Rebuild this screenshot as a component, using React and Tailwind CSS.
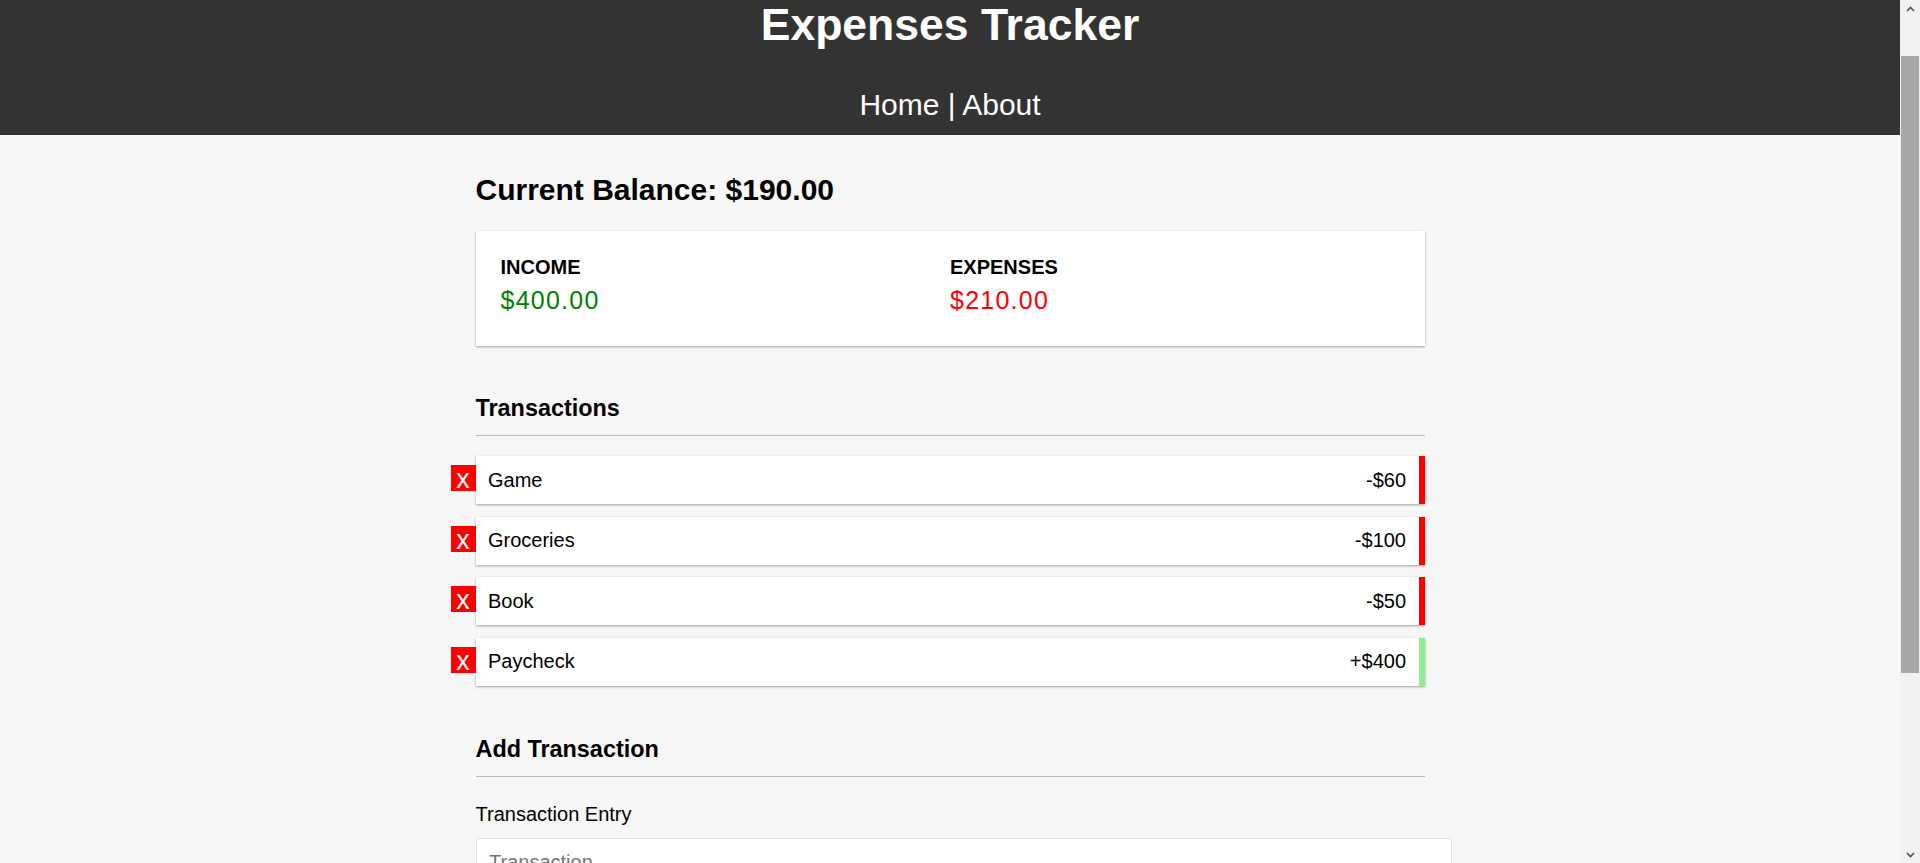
import React from "react";

const transactions = [
  { id: 1, text: "Game", amount: "-$60", plus: false },
  { id: 2, text: "Groceries", amount: "-$100", plus: false },
  { id: 3, text: "Book", amount: "-$50", plus: false },
  { id: 4, text: "Paycheck", amount: "+$400", plus: true },
];

function Scrollbar() {
  return (
    <div className="w-[20px] h-full bg-[#f1f1f1] flex flex-col shrink-0">
      <div className="h-[17px] flex items-center justify-center">
        <svg width="9" height="6" viewBox="0 0 9 6">
          <polyline points="1,5 4.5,1.5 8,5" fill="none" stroke="#505050" strokeWidth="1.6" />
        </svg>
      </div>
      <div className="h-[39px]" />
      <div className="h-[617px] mx-[1px] bg-[#a8a8a8]" />
      <div className="flex-1" />
      <div className="h-[17px] flex items-center justify-center">
        <svg width="9" height="6" viewBox="0 0 9 6">
          <polyline points="1,1 4.5,4.5 8,1" fill="none" stroke="#505050" strokeWidth="1.6" />
        </svg>
      </div>
    </div>
  );
}

export default function App() {
  return (
    <div className="flex h-[863px] w-full overflow-hidden font-['Liberation_Sans',Arial,sans-serif]">
      <div className="flex-1 min-w-0 h-full overflow-hidden bg-[#f6f6f6] text-black">
        <header className="bg-[#333333] text-white text-center pb-[13px]">
          <h1 className="text-[44.5px] leading-[50px] font-bold m-0">Expenses Tracker</h1>
          <nav className="mt-[37px] text-[30px] leading-[35px]">
            <a className="text-white no-underline">Home</a> | <a className="text-white no-underline">About</a>
          </nav>
        </header>

        <main className="w-[949px] mx-auto pt-[37px]">
          <h2 className="text-[30px] leading-[35px] font-bold">Current Balance: $190.00</h2>

          <div className="mt-[24px] bg-white shadow-[0_1px_3px_rgba(0,0,0,0.12),0_1px_2px_rgba(0,0,0,0.24)] px-[25px] pt-[25px] pb-[25px] flex">
            <div className="flex-1">
              <h4 className="text-[20px] leading-[23px] font-bold uppercase">Income</h4>
              <p className="mt-[7px] mb-[6px] text-[25px] leading-[29px] tracking-[1.25px] text-[#008000]">$400.00</p>
            </div>
            <div className="flex-1">
              <h4 className="text-[20px] leading-[23px] font-bold uppercase">Expenses</h4>
              <p className="mt-[7px] mb-[6px] text-[25px] leading-[29px] tracking-[1.25px] text-[#ff0000]">$210.00</p>
            </div>
          </div>

          <h3 className="mt-[49px] text-[23.4px] leading-[27px] font-bold pb-[13px] border-b border-[#bbbbbb]">Transactions</h3>

          <ul className="mt-[20px] flex flex-col gap-[12.5px]">
            {transactions.map((t) => (
              <li
                key={t.id}
                className={`relative flex justify-between bg-white shadow-[0_1px_3px_rgba(0,0,0,0.12),0_1px_2px_rgba(0,0,0,0.24)] py-[12.5px] pl-[12.5px] pr-[12.5px] text-[20px] leading-[23px] border-r-[6px] ${
                  t.plus ? "border-[#90ee90]" : "border-[#ff0000]"
                }`}
              >
                <button className="absolute left-[-25px] top-[9px] w-[25px] h-[26px] bg-[#ff0000] text-white text-[27px] leading-[26px] flex items-end justify-center font-['Liberation_Sans',Arial,sans-serif]">
                  <span className="leading-[24px]">x</span>
                </button>
                <span>{t.text}</span>
                <span>{t.amount}</span>
              </li>
            ))}
          </ul>

          <h3 className="mt-[50px] text-[23.4px] leading-[27px] font-bold pb-[13px] border-b border-[#bbbbbb]">Add Transaction</h3>

          <form>
            <div>
              <label className="inline-block mt-[26px] mb-[12px] text-[20px] leading-[23px]">Transaction Entry</label>
              <input
                type="text"
                placeholder="Transaction"
                className="block box-content w-full border border-[#dedede] rounded-[2.5px] bg-white p-[12.5px] text-[20px] leading-[23px] placeholder:text-[#757575] outline-none"
              />
            </div>
            <div>
              <label className="inline-block mt-[12.5px] mb-[12.5px] text-[20px] leading-[23px]">Amount</label>
              <input
                type="number"
                placeholder="Amount"
                className="block box-content w-full border border-[#dedede] rounded-[2.5px] bg-white p-[12.5px] text-[20px] leading-[23px] placeholder:text-[#757575] outline-none"
              />
            </div>
            <button className="mt-[12.5px] w-full bg-[#9c88ff] text-white text-[20px] py-[12.5px]">Add transaction</button>
          </form>
        </main>
      </div>
      <Scrollbar />
    </div>
  );
}
